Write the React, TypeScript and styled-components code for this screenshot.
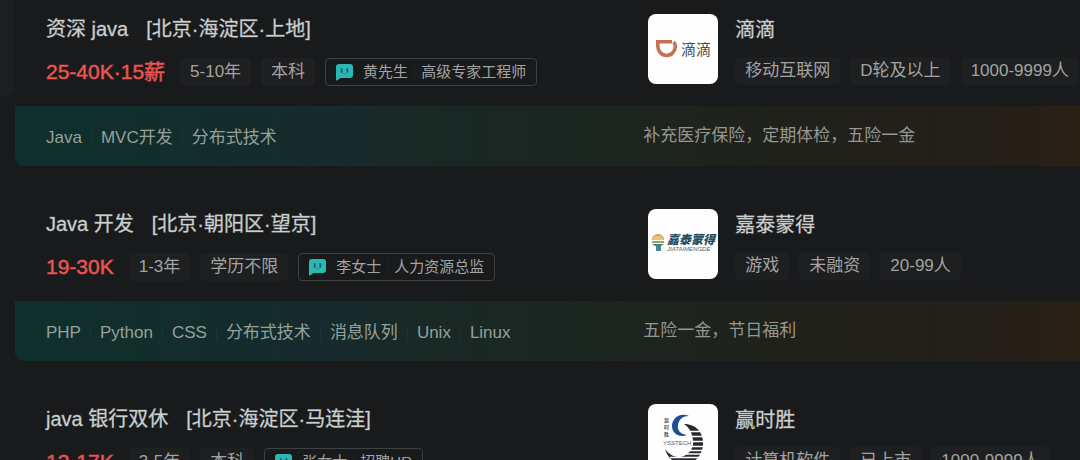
import React from "react";
import styled, { createGlobalStyle } from "styled-components";

const GlobalStyle = createGlobalStyle`
  * { box-sizing: border-box; }
  body {
    margin: 0;
    background: #191a1c;
    color: #a2a4a3;
    font-family: "Liberation Sans", "Noto Sans CJK SC", sans-serif;
  }
  ul { margin: 0; padding: 0; list-style: none; }
  a { color: inherit; text-decoration: none; }
`;

const Page = styled.div`
  display: grid;
  grid-template-columns: 15px minmax(0, 1fr);
  align-items: start;
  height: 100vh;
  overflow: hidden;
`;

const Gutter = styled.div`
  height: 96px;
  margin-right: 1px;
  border-bottom-right-radius: 8px;
  background: #1d1e20;
`;

const JobList = styled.ul`
  display: flex;
  flex-direction: column;
  gap: 29px;
`;

const Columns = styled.div`
  display: grid;
  grid-template-columns: minmax(0, 59fr) minmax(0, 41fr);
`;

const Card = styled.li`
  padding-top: 14px;
`;

const JobInfo = styled.div`
  padding-left: 31px;
`;

const JobTitle = styled.a`
  display: flex;
  gap: 18px;
  font-size: 20px;
  line-height: 30px;
  color: #cbd1d0;
  -webkit-text-stroke: 1px #cbd1d04d;
  white-space: nowrap;
`;

const Row = styled.div`
  display: flex;
  align-items: center;
  gap: 10px;
  height: 28px;
  line-height: 28px;
  white-space: nowrap;
`;

const JobRow = styled(Row)`
  margin-top: 14px;
`;

const CompanyRow = styled(Row)`
  margin-top: 11px;
`;

const Salary = styled.span`
  margin-right: 5px;
  font-size: 21px;
  color: #ee5550;
  -webkit-text-stroke: 1px #ee555080;
`;

const Tag = styled.span`
  flex: none;
  padding: 0 10px;
  border-radius: 4px;
  background: #1e1f20;
  font-size: 17px;
  line-height: 28px;
`;

const Recruiter = styled.button`
  display: flex;
  align-items: center;
  height: 28px;
  padding: 0 10px;
  border: 1px solid #3e4041;
  border-radius: 4px;
  background: transparent;
  color: #a2a4a3;
  font: inherit;
  font-size: 15px;
  line-height: 26px;
  white-space: nowrap;
  svg { margin-right: 10px; }
`;

const Divider = styled.i<{ $space: number }>`
  width: 1px;
  height: 14px;
  margin: 0 ${(p) => p.$space}px;
  background: #ffffff0a;
`;

const Company = styled.div`
  display: flex;
  gap: 17px;
  padding-left: 5px;
`;

const LogoBox = styled.div`
  flex: none;
  width: 70px;
  height: 70px;
  border-radius: 8px;
  background: #fefefe;
  overflow: hidden;
  svg { display: block; }
`;

const CompanyName = styled.a`
  display: block;
  font-size: 20px;
  line-height: 32px;
  color: #cdcfce;
  -webkit-text-stroke: 1px #cdcfce4d;
`;

const Footer = styled(Columns)`
  height: 60px;
  margin-top: 20px;
  border-bottom-left-radius: 9px;
  background: linear-gradient(90deg, #0f302d 0%, #132d2b 18%, #172a2d 29%, #192925 38%, #1c2621 55%, #20211b 72%, #231f19 90%, #2a2115 100%);
  font-size: 17px;
  line-height: 60px;
  white-space: nowrap;
`;

const Skills = styled.ul`
  display: flex;
  align-items: center;
  padding: 4px 0 0 31px;
  line-height: 56px;
  color: #95a09b;
`;

const Skill = styled.li`
  display: flex;
  align-items: center;
`;

const Benefits = styled.p`
  margin: 0;
  color: #969790;
`;

const ChatIcon = () => (
  <svg width="17" height="17" viewBox="0 0 17 17" aria-hidden="true">
    <path d="M3 0h11a3 3 0 0 1 3 3v8a3 3 0 0 1-3 3H5c-1.400 0-2.200 2-4.200 2.400C.2 16.500 0 16 0 15.400V3a3 3 0 0 1 3-3Z" fill="#2bb8b5" />
    <path d="M5.700 5v3M11.300 5v3" stroke="#17605f" strokeWidth="1.800" strokeLinecap="round" />
    <path d="M7 9.400q1.500 1 3 0" stroke="#1c8583" fill="none" />
  </svg>
);

const DidiLogo = () => (
  <svg width="70" height="70" viewBox="0 0 70 70" role="img" aria-label="滴滴">
    <path d="M8 27.800h16M9.800 28v4.200a8.800 9.300 0 0 0 17.600 0c0-1.800-.6-3-1.900-4.200" fill="none" stroke="#c27350" strokeWidth="3.600" />
    <text x="33" y="41" fontSize="15" fill="#4d4d4d">滴滴</text>
  </svg>
);

const JiataiLogo = () => (
  <svg width="70" height="70" viewBox="0 0 70 70" role="img" aria-label="嘉泰蒙得">
    <path d="M4 31c0-8 12-8 12 0Z" fill="#d9a257" />
    <path d="M5 30h10M6 28h8" stroke="#f4dfb2" />
    <path d="M4 32h12v2H4z" fill="#9aa357" />
    <path d="M4 35h12l-3 2H7Z" fill="#418668" />
    <path d="M8 37h5v5H8z" fill="#4b829c" />
    <text x="19" y="35" fontSize="12" fontWeight="900" fill="#244c60" fontStyle="italic">嘉泰蒙得</text>
    <text x="19" y="42" fontSize="6" fill="#52636b" fontStyle="italic">JIATAIMENGDE</text>
  </svg>
);

const YsstechLogo = () => (
  <svg width="70" height="70" viewBox="0 0 70 70" role="img" aria-label="赢时胜 YSSTECH">
    <g fontSize="5" fontWeight="700" fill="#555">
      <text x="16" y="18">赢</text>
      <text x="16" y="25">时</text>
      <text x="16" y="32">胜</text>
    </g>
    <path d="M41 12C31 8 24 15 24 22c0 8 8 12 15 9-7-1-10-5-9-10 1-6 5-9 11-9Z" fill="#1d4f8f" />
    <path d="M36 20C50 20 56 31 55 41C54 54 43 62 32 60C24 58 19 52 17 45C22 52 30 55 36 52C43 49 46 42 45 36C44 29 42 24 36 20Z" fill="#26282d" />
    <path d="M42 27.500h16M42 32.500h16M42 37.500h16M42 42.500h16M38 46.500h20M34 50h24M22 53.500h34M22 57h34" stroke="#fefefe" strokeWidth="1.500" />
    <text x="15" y="41" fontSize="6" fill="#565b68">YSSTECH</text>
  </svg>
);

interface Job {
  title: string;
  area: string;
  salary: string;
  tags: string[];
  recruiter: string;
  role: string;
  logo: React.ReactNode;
  company: string;
  companyTags: string[];
  skills?: string[];
  benefits?: string;
}

const jobs: Job[] = [
  {
    title: "资深 java",
    area: "[北京·海淀区·上地]",
    salary: "25-40K·15薪",
    tags: ["5-10年", "本科"],
    recruiter: "黄先生",
    role: "高级专家工程师",
    logo: <DidiLogo />,
    company: "滴滴",
    companyTags: ["移动互联网", "D轮及以上", "1000-9999人"],
    skills: ["Java", "MVC开发", "分布式技术"],
    benefits: "补充医疗保险，定期体检，五险一金",
  },
  {
    title: "Java 开发",
    area: "[北京·朝阳区·望京]",
    salary: "19-30K",
    tags: ["1-3年", "学历不限"],
    recruiter: "李女士",
    role: "人力资源总监",
    logo: <JiataiLogo />,
    company: "嘉泰蒙得",
    companyTags: ["游戏", "未融资", "20-99人"],
    skills: ["PHP", "Python", "CSS", "分布式技术", "消息队列", "Unix", "Linux"],
    benefits: "五险一金，节日福利",
  },
  {
    title: "java 银行双休",
    area: "[北京·海淀区·马连洼]",
    salary: "13-17K",
    tags: ["3-5年", "本科"],
    recruiter: "张女士",
    role: "招聘HR",
    logo: <YsstechLogo />,
    company: "赢时胜",
    companyTags: ["计算机软件", "已上市", "1000-9999人"],
  },
];

const JobCard = ({ job }: { job: Job }) => (
  <Card>
    <Columns>
      <JobInfo>
        <JobTitle href="#">
          <span>{job.title}</span>
          <span>{job.area}</span>
        </JobTitle>
        <JobRow>
          <Salary>{job.salary}</Salary>
          {job.tags.map((t) => <Tag key={t}>{t}</Tag>)}
          <Recruiter type="button">
            <ChatIcon />
            {job.recruiter}
            <Divider $space={6} />
            {job.role}
          </Recruiter>
        </JobRow>
      </JobInfo>
      <Company>
        <LogoBox>{job.logo}</LogoBox>
        <div>
          <CompanyName href="#">{job.company}</CompanyName>
          <CompanyRow>
            {job.companyTags.map((t) => <Tag key={t}>{t}</Tag>)}
          </CompanyRow>
        </div>
      </Company>
    </Columns>
    {job.skills && (
      <Footer>
        <Skills>
          {job.skills.map((s, i) => (
            <Skill key={s}>
              {i > 0 && <Divider $space={9} />}
              {s}
            </Skill>
          ))}
        </Skills>
        <Benefits>{job.benefits}</Benefits>
      </Footer>
    )}
  </Card>
);

export default function App() {
  return (
    <>
      <GlobalStyle />
      <Page lang="zh-CN">
        <Gutter />
        <JobList>
          {jobs.map((job) => <JobCard key={job.title} job={job} />)}
        </JobList>
      </Page>
    </>
  );
}
